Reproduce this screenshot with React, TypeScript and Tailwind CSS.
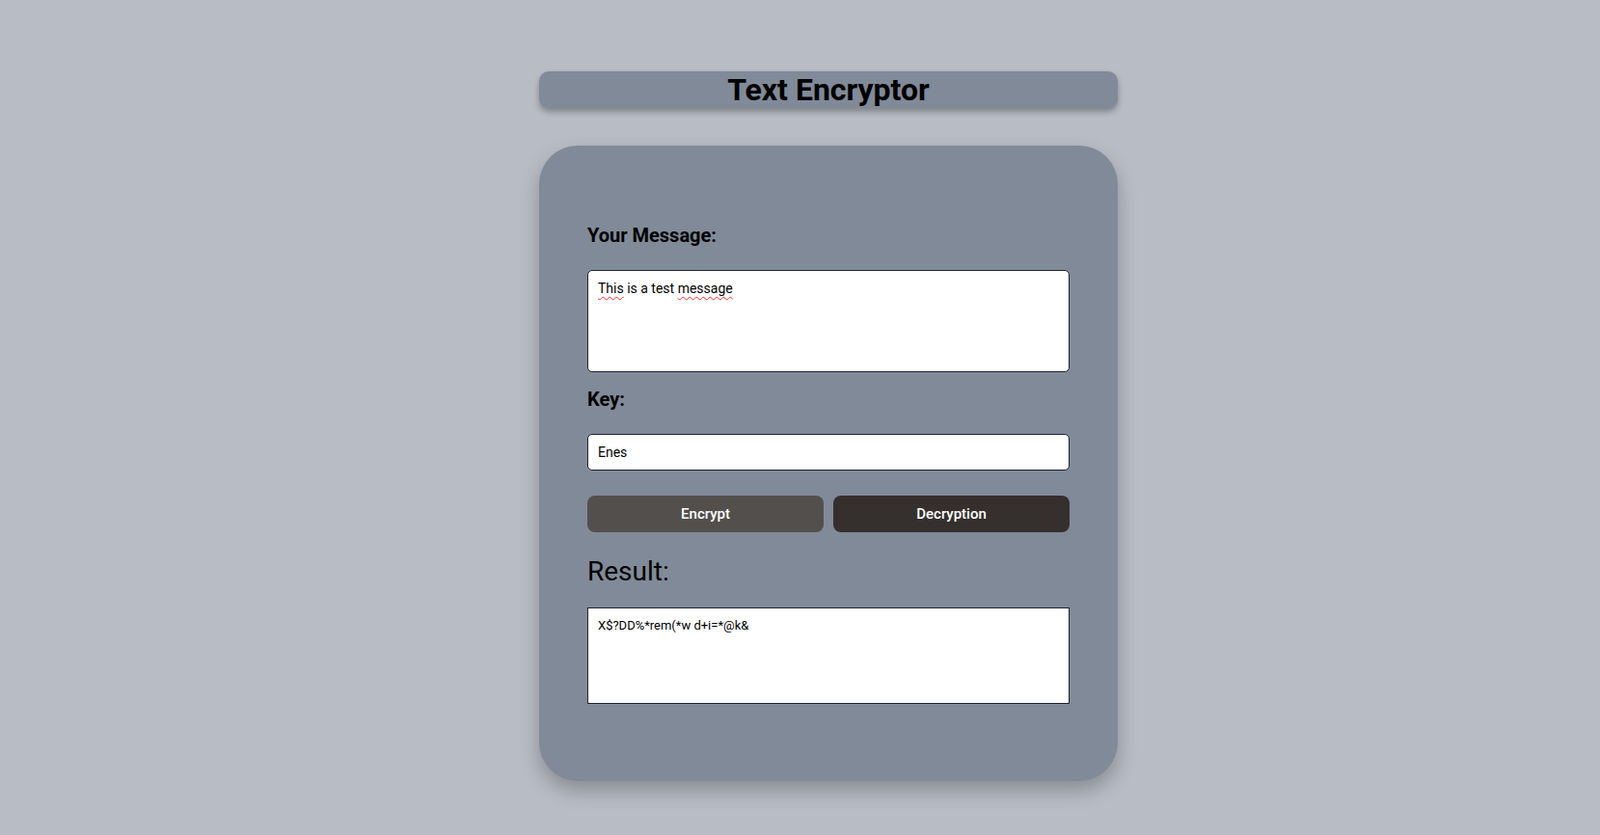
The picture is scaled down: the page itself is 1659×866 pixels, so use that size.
import React from 'react'

export default function App() {
  const font = { fontFamily: 'Roboto, "Noto Sans", sans-serif' }

  return (
    <div className="min-h-[866px] w-full bg-[#b8bcc5] text-black" style={font}>
      <div className="flex flex-col items-center pt-[74px] pl-[59px]">
        <h1 className="w-[600px] h-[38px] rounded-[10px] bg-[#818a98] text-center text-[32px] leading-[38px] font-bold shadow-[0_4px_6px_rgba(0,0,0,0.3)]">
          Text Encryptor
        </h1>

        <div className="mt-[39px] w-[600px] rounded-[40px] bg-[#818a98] px-[50px] pt-[79px] pb-[80px] shadow-[0_10px_20px_rgba(0,0,0,0.25)]">
          <label className="block text-[20px] leading-[28px] font-bold">Your Message:</label>
          <div className="mt-[22px] h-[106px] rounded-[5px] border border-[#1f2430] bg-white px-[10px] py-[9px] text-[14px] leading-[18px]">
            <span className="underline decoration-wavy decoration-red-500 underline-offset-[3px] decoration-[1px]">This</span> is a test{' '}
            <span className="underline decoration-wavy decoration-red-500 underline-offset-[3px] decoration-[1px]">message</span>
          </div>

          <label className="mt-[14px] block text-[20px] leading-[28px] font-bold">Key:</label>
          <input
            className="mt-[22px] block h-[38px] w-full rounded-[5px] border border-[#1f2430] bg-white px-[10px] text-[14px] outline-none"
            defaultValue="Enes"
          />

          <div className="mt-[26px] flex gap-[10px]">
            <button className="h-[38px] flex-1 rounded-[8px] bg-[#534f4d] text-[15px] font-medium text-white">
              Encrypt
            </button>
            <button className="h-[38px] flex-1 rounded-[8px] bg-[#352f2d] text-[15px] font-medium text-white">
              Decryption
            </button>
          </div>

          <h2 className="mt-[23px] text-[28px] leading-[36px] font-normal">Result:</h2>
          <textarea
            readOnly
            className="mt-[19px] block h-[100px] w-full resize-none border border-[#1f2430] bg-white px-[10px] py-[10px] text-[13px] leading-[16px] outline-none"
            value="X$?DD%*rem(*w d+i=*@k&"
          />
        </div>
      </div>
    </div>
  )
}
